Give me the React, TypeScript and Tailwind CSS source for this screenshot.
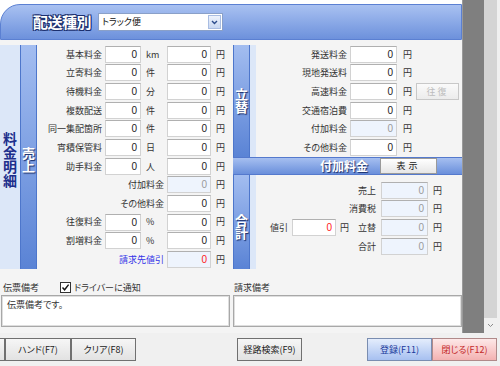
import React from "react";

type Row = { l: string; u?: string; b?: boolean; ro?: boolean; blue?: boolean; red?: boolean };

const leftRows: Row[] = [
  { l: "基本料金", u: "km" },
  { l: "立寄料金", u: "件" },
  { l: "待機料金", u: "分" },
  { l: "複数配送", u: "件" },
  { l: "同一集配箇所", u: "件" },
  { l: "宵積保管料", u: "日" },
  { l: "助手料金", u: "人" },
  { l: "付加料金", b: true, ro: true },
  { l: "その他料金", b: true },
  { l: "往復料金", u: "%" },
  { l: "割増料金", u: "%" },
  { l: "請求先値引", b: true, ro: true, blue: true, red: true },
];

function Box({ w, ro, red, value = "0" }: { w: string; ro?: boolean; red?: boolean; value?: string }) {
  const bg = ro ? "bg-[#eef4fd]" : "bg-white";
  const color = red ? "text-[#ff2020]" : ro ? "text-[#9a9a9a]" : "text-[#222]";
  return (
    <div
      className={`${w} ${bg} ${color} h-[17px] shrink-0 border border-[#d2d2d2] border-t-[#b0b0b0] flex items-center justify-end pr-[3px] text-[10px] font-['Liberation_Sans',sans-serif]`}
    >
      {value}
    </div>
  );
}

function VBlue({ text, extra = "" }: { text: string; extra?: string }) {
  return (
    <div
      className={`w-[17px] shrink-0 bg-gradient-to-b from-[#a3bdf0] to-[#5a83d5] border-x border-[#4d76cb] flex flex-col items-center justify-center ${extra}`}
    >
      <span className="[writing-mode:vertical-rl] [text-orientation:upright] leading-none text-white font-bold text-[13px] [text-shadow:1px_1px_1px_#152a66]">
        {text}
      </span>
    </div>
  );
}

export default function App() {
  return (
    <div className="w-[500px] h-[366px] overflow-hidden bg-[#f0f0f0] flex flex-col font-['Noto_Sans_CJK_JP',sans-serif] [font-feature-settings:'palt'] text-[#333] text-[9px]">
      <div className="flex h-[333px]">
        {/* main */}
        <div className="w-[462px] shrink-0 flex flex-col bg-white">
          <div className="h-[4px]" />
          {/* header */}
          <div className="h-[36px] rounded-tl-[20px] bg-gradient-to-b from-[#a9c1f1] to-[#6d91dc] border border-[#5b80d2] flex items-center pl-[32px]">
            <span className="text-white font-bold text-[15px] tracking-[-0.5px] [text-shadow:1px_1px_0_#1b2f6e,-1px_-1px_0_#1b2f6e,1px_-1px_0_#1b2f6e,-1px_1px_0_#1b2f6e]">
              配送種別
            </span>
            <div className="ml-[7px] w-[125px] h-[18px] bg-white border border-[#8aa0c8] flex items-center">
              <span className="pl-[3px] flex-1 text-[9px] text-[#111]">トラック便</span>
              <div className="w-[13px] h-[14px] mr-[1px] bg-gradient-to-b from-[#eef3fc] to-[#c9d8f2] border border-[#a9bde2] flex items-center justify-center">
                <svg width="7" height="5" viewBox="0 0 7 5">
                  <path d="M1 1 L3.5 3.5 L6 1" stroke="#2c4c8c" strokeWidth="1.4" fill="none" />
                </svg>
              </div>
            </div>
          </div>
          {/* body */}
          <div className="flex-1 bg-[#f4f4f4] flex flex-col">
            <div className="h-[5px]" />
            <div className="h-[224px] flex">
              <div className="w-[20px] shrink-0 bg-[#dce7f8] flex flex-col items-center justify-center pt-[6px]">
                <span className="[writing-mode:vertical-rl] [text-orientation:upright] leading-none text-[14px] font-bold text-[#1d2f8c]">
                  料金明細
                </span>
              </div>
              <VBlue text="売上" extra="pt-[6px]" />
              {/* left content */}
              <div className="w-[196px] shrink-0 flex flex-col">
                {leftRows.map((r, i) => (
                  <div key={i} className="h-[18.67px] flex items-center">
                    {r.b ? (
                      <>
                        <div className={`w-[127px] shrink-0 flex justify-end whitespace-nowrap ${r.blue ? "text-[#3535e8]" : ""}`}>{r.l}</div>
                        <div className="w-[3px] shrink-0" />
                        <Box w="w-[44px]" ro={r.ro} red={r.red} />
                      </>
                    ) : (
                      <>
                        <div className="w-[65px] shrink-0 flex justify-end whitespace-nowrap">{r.l}</div>
                        <div className="w-[3px] shrink-0" />
                        <Box w="w-[36px]" />
                        <div className="w-[26px] shrink-0 pl-[5px] text-[9px]">{r.u}</div>
                        <Box w="w-[44px]" />
                      </>
                    )}
                    <span className="ml-[5px]">円</span>
                  </div>
                ))}
              </div>
              {/* right part */}
              <div className="w-[229px] shrink-0 flex flex-col">
                <div className="h-[112px] flex">
                  <VBlue text="立替" />
                  <div className="w-[6px] shrink-0 bg-[#dce7f8]" />
                  <div className="flex-1 flex flex-col">
                    {["発送料金", "現地発送料", "高速料金", "交通宿泊費", "付加料金", "その他料金"].map((l, i) => (
                      <div key={i} className="h-[18.67px] flex items-center">
                        <div className="w-[91px] shrink-0 flex justify-end whitespace-nowrap">{l}</div>
                        <div className="w-[3px] shrink-0" />
                        <Box w="w-[47px]" ro={l === "付加料金"} />
                        <div className="w-[19px] shrink-0 pl-[6px]">円</div>
                        {i === 2 && (
                          <div className="w-[43px] h-[17px] border border-[#c8c8c8] bg-gradient-to-b from-[#fafafa] to-[#ececec] flex items-center justify-center text-[#bdbdbd] tracking-[2px]">
                            往復
                          </div>
                        )}
                      </div>
                    ))}
                  </div>
                </div>
                {/* 付加料金 header */}
                <div className="h-[18px] bg-gradient-to-b from-[#a6bff0] to-[#6a8fdb] border-y border-[#5479cd] flex items-center justify-end pr-[25px]">
                  <span className="text-white font-bold text-[12px] [text-shadow:1px_1px_1px_#152a66]">付加料金</span>
                  <div className="ml-[12px] w-[57px] h-[16px] border border-[#9a9a9a] bg-gradient-to-b from-[#ffffff] to-[#e6e6e6] flex items-center justify-center text-[#222] tracking-[3px]">
                    表示
                  </div>
                </div>
                <div className="h-[94px] flex">
                  <VBlue text="合計" extra="pt-[10px]" />
                  <div className="w-[6px] shrink-0 bg-[#dce7f8]" />
                  <div className="flex-1 flex flex-col pt-[6px]">
                    {["売上", "消費税", "立替", "合計"].map((l, i) => (
                      <div key={i} className="h-[18.67px] flex items-center">
                        <div className="w-[92px] shrink-0 flex items-center">
                          {i === 2 && (
                            <>
                              <div className="w-[32px] shrink-0 flex justify-end">値引</div>
                              <div className="w-[4px] shrink-0" />
                              <Box w="w-[44px]" red />
                              <span className="ml-[4px]">円</span>
                            </>
                          )}
                        </div>
                        <div className="w-[28px] shrink-0 flex justify-end whitespace-nowrap">{l}</div>
                        <div className="w-[5px] shrink-0" />
                        <Box w="w-[47px]" ro />
                        <span className="ml-[5px]">円</span>
                      </div>
                    ))}
                  </div>
                </div>
              </div>
            </div>
            {/* bottom notes */}
            <div className="h-[11px]" />
            <div className="h-[15px] flex items-center">
              <span className="ml-[3px] w-[57px]">伝票備考</span>
              <div className="w-[11px] h-[11px] border border-[#333] bg-white flex items-center justify-center">
                <svg width="9" height="9" viewBox="0 0 9 9">
                  <path d="M1.5 4.5 L3.6 6.8 L7.6 1.6" stroke="#111" strokeWidth="1.4" fill="none" />
                </svg>
              </div>
              <span className="ml-[3px] w-[160px]">ドライバーに通知</span>
              <span>請求備考</span>
            </div>
            <div className="h-[32px] flex pl-[1px]">
              <div className="w-[229px] h-full bg-white border border-[#a8a8a8] shadow-[inset_0_0_0_1px_#dedede] px-[5px] pt-[3px] leading-[12px]">
                伝票備考です。
              </div>
              <div className="w-[3px]" />
              <div className="w-[229px] h-full bg-white border border-[#a8a8a8] shadow-[inset_0_0_0_1px_#dedede]" />
            </div>
          </div>
        </div>
        <div className="w-[22px] shrink-0 bg-[#7f7f7f] border-l border-[#9a9a9a]" />
        <div className="w-[16px] shrink-0 flex flex-col bg-[#f0f0f0]">
          <div className="h-[318px] w-[13px] bg-[#d4d4d4]" />
          <div className="h-[15px] w-[13px] flex items-center justify-center">
            <svg width="7" height="5" viewBox="0 0 7 5">
              <path d="M1 1 L3.5 3.5 L6 1" stroke="#8a8a8a" strokeWidth="1" fill="none" />
            </svg>
          </div>
        </div>
      </div>
      {/* buttons */}
      <div className="flex-1 flex pt-[5px] text-[9px]">
        <div className="h-[23px] w-[5px] border-y border-r border-[#707070] bg-gradient-to-b from-[#f6f6f6] to-[#e2e2e2]" />
        <div className="h-[23px] w-[66px] border border-[#707070] bg-gradient-to-b from-[#f6f6f6] to-[#e2e2e2] flex items-center justify-center text-[#222]">
          ハンド(F7)
        </div>
        <div className="h-[23px] w-[65px] border border-[#707070] bg-gradient-to-b from-[#f6f6f6] to-[#e2e2e2] flex items-center justify-center text-[#222]">
          クリア(F8)
        </div>
        <div className="w-[101px]" />
        <div className="h-[23px] w-[65px] border border-[#707070] bg-gradient-to-b from-[#f6f6f6] to-[#e2e2e2] flex items-center justify-center text-[#222]">
          経路検索(F9)
        </div>
        <div className="w-[65px]" />
        <div className="h-[23px] w-[65px] border border-[#7a8db0] bg-gradient-to-b from-[#e4edfc] to-[#a7c0f0] flex items-center justify-center text-[#1c3a9c]">
          登録(F11)
        </div>
        <div className="h-[23px] w-[65px] border border-[#b08a8a] bg-gradient-to-b from-[#fde8e8] to-[#f3b2b2] flex items-center justify-center text-[#c42a2a]">
          閉じる(F12)
        </div>
      </div>
    </div>
  );
}
